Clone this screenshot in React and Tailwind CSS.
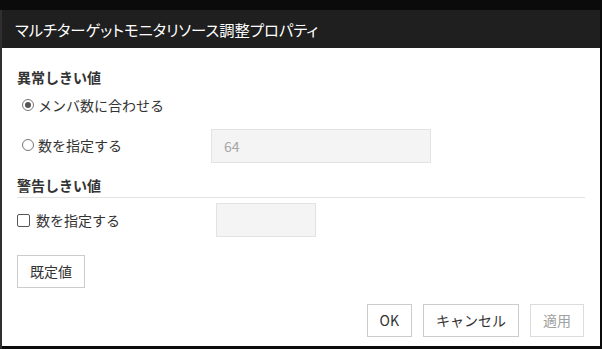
const FONT = { fontFamily: '"Noto Sans CJK JP", "Noto Sans", sans-serif' };

function Radio({ checked }) {
  return (
    <span className="inline-flex h-[12px] w-[12px] shrink-0 items-center justify-center rounded-full border border-[#767676] bg-white">
      {checked && <span className="h-[6px] w-[6px] rounded-full bg-[#555]" />}
    </span>
  );
}

function Checkbox() {
  return <span className="inline-block h-[13px] w-[13px] shrink-0 rounded-[2px] border border-[#555] bg-white" />;
}

function Button({ children, disabled }) {
  return (
    <button
      className={`h-[33px] border bg-white px-3 text-[14px] ${
        disabled ? "border-[#dcdcdc] text-[#a0a0a0]" : "border-[#cccccc] text-[#333]"
      }`}
    >
      {children}
    </button>
  );
}

export default function App() {
  return (
    <div className="h-[349px] w-[602px] overflow-hidden bg-[#0b0b0b]" style={FONT}>
      <div className="flex pt-[10px]">
        <div className="h-[339px] w-[2px] bg-[#2f2f2f]" />
        <div className="flex h-[336px] w-[598px] flex-col bg-white">
          <div className="flex h-[38px] items-center bg-[#1f1f1f] px-[13px] text-[15.3px] text-white [font-feature-settings:'palt']">
            マルチターゲットモニタリソース調整プロパティ
          </div>

          <div className="flex flex-1 flex-col px-[15px] pt-[19px] text-[14px] text-[#333]">
            <div className="h-5 font-bold leading-5">異常しきい値</div>

            <div className="mt-[8px] flex h-5 items-center gap-[4px] pl-[5px]">
              <Radio checked />
              <span className="leading-5">メンバ数に合わせる</span>
            </div>

            <div className="mt-[14px] flex h-[34px] items-center">
              <div className="flex w-[194px] items-center gap-[4px] pl-[5px] pb-[2px]">
                <Radio />
                <span className="leading-5">数を指定する</span>
              </div>
              <div className="flex h-[34px] w-[220px] items-center border border-[#e3e3e3] bg-[#f4f4f4] px-3 text-[#a6a6a6]">
                64
              </div>
            </div>

            <div className="mt-[12px] border-b border-[#e2e2e2] pb-[2px]">
              <div className="h-5 font-bold leading-5">警告しきい値</div>
            </div>

            <div className="mt-[5px] flex h-[34px] items-start">
              <div className="flex w-[199px] items-center gap-[6px] pt-[7px]">
                <Checkbox />
                <span className="leading-5">数を指定する</span>
              </div>
              <div className="h-[34px] w-[100px] border border-[#e3e3e3] bg-[#f4f4f4]" />
            </div>

            <div className="mt-[18px]">
              <Button>既定値</Button>
            </div>

            <div className="mt-[16px] flex justify-end gap-[11px] pr-px">
              <Button>OK</Button>
              <Button>キャンセル</Button>
              <Button disabled>適用</Button>
            </div>
          </div>
        </div>
      </div>
    </div>
  );
}
